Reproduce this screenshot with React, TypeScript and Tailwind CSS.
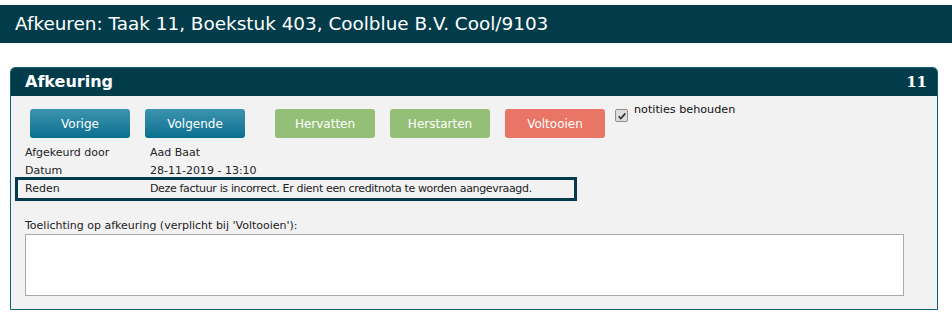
import React from "react";

const font = { fontFamily: '"DejaVu Sans", Verdana, sans-serif' };

function Btn({ label, tone }: { label: string; tone: "blue" | "green" | "red" }) {
  const tones = {
    blue: "bg-gradient-to-b from-[#3b94af] to-[#04708f]",
    green: "bg-[#93bf77]",
    red: "bg-[#e87565]",
  };
  return (
    <button
      className={`h-[29px] w-[100px] rounded-[3px] text-[12px] text-white ${tones[tone]}`}
    >
      {label}
    </button>
  );
}

export default function App() {
  const rows = [
    ["Afgekeurd door", "Aad Baat"],
    ["Datum", "28-11-2019 - 13:10"],
  ];

  return (
    <div className="min-h-[321px] bg-white pt-[5px] text-[#222]" style={font}>
      {/* Title bar */}
      <div className="flex h-[38px] items-center bg-[#023c4b] pl-[15px] text-[18.4px] text-white">
        Afkeuren: Taak 11, Boekstuk 403, Coolblue B.V. Cool/9103
      </div>

      {/* Panel */}
      <div className="ml-[10px] mt-[24px] w-[928px] overflow-hidden rounded-t-[5px] border border-[#0d6078]">
        <div className="flex h-[28px] items-center justify-between bg-[#023c4b] pl-[14px] pr-[10px] text-white">
          <span className="text-[16px] font-bold">Afkeuring</span>
          <span className="text-[15px] font-bold" style={{ fontFamily: '"DejaVu Serif", Georgia, serif' }}>
            11
          </span>
        </div>

        <div className="bg-[#f2f2f2] pb-[13px] pt-[13px]">
          {/* Actions */}
          <div className="flex items-start pl-[19px]">
            <Btn label="Vorige" tone="blue" />
            <div className="ml-[15px]">
              <Btn label="Volgende" tone="blue" />
            </div>
            <div className="ml-[30px]">
              <Btn label="Hervatten" tone="green" />
            </div>
            <div className="ml-[15px]">
              <Btn label="Herstarten" tone="green" />
            </div>
            <div className="ml-[15px]">
              <Btn label="Voltooien" tone="red" />
            </div>
            <label className="ml-[10px] flex items-start gap-[6px] text-[11.2px] text-[#111]">
              <span className="flex h-[13px] w-[13px] items-center justify-center rounded-[2px] border border-[#8f8f8f] bg-[#dcdcdc]">
                <svg viewBox="0 0 12 12" className="h-[10px] w-[10px]">
                  <path d="M2 6.5 L4.6 9 L10 2.8" fill="none" stroke="#333" strokeWidth="2" />
                </svg>
              </span>
              <span className="-mt-[7px] leading-[16px]">notities behouden</span>
            </label>
          </div>

          {/* Details */}
          <div className="ml-[7px] mt-[6px] w-[556px] text-[11px]">
            {rows.map(([k, v]) => (
              <div key={k} className="flex h-[18px] items-center pl-[7px]">
                <span className="w-[125px]">{k}</span>
                <span>{v}</span>
              </div>
            ))}
            <div className="flex h-[18px] items-center pl-[7px] outline-[3px] outline-solid outline-[#023c4b]">
              <span className="w-[125px]">Reden</span>
              <span className="tracking-[-0.35px]">
                Deze factuur is incorrect. Er dient een creditnota te worden aangevraagd.
              </span>
            </div>
          </div>

          {/* Remarks */}
          <div className="ml-[14px] mt-[20px] text-[11px] leading-[15px]">
            Toelichting op afkeuring (verplicht bij 'Voltooien'):
          </div>
          <textarea className="ml-[14px] mt-[1px] block h-[62px] w-[879px] resize-none border border-[#a9a9a9] bg-white outline-none" />
        </div>
      </div>
    </div>
  );
}
